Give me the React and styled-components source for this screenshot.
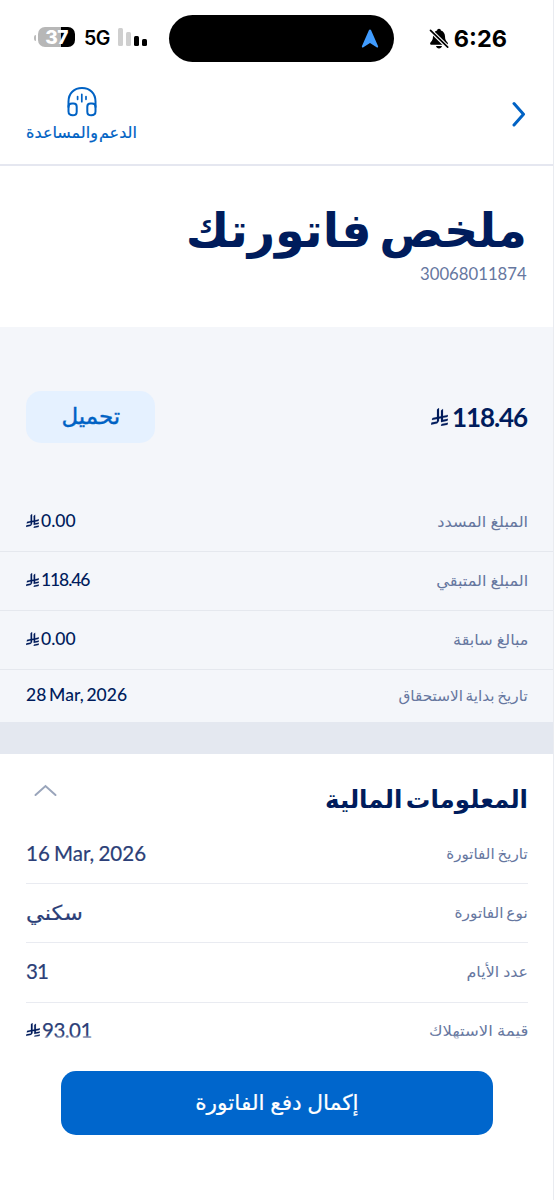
import React from "react";
import styled, { createGlobalStyle } from "styled-components";

const navy = "#001c5c";
const blue = "#0062c4";

const GlobalStyle = createGlobalStyle`
  * { box-sizing: border-box; }
  body { margin: 0; background: #fff; }
  h1, h2 { margin: 0; }
`;

const Page = styled.div`
  position: relative;
  width: 554px;
  height: 1200px;
  overflow: hidden;
  background: #fff;
  border-right: 1px solid #e9ebf0;
  font-family: Lato, "DejaVu Sans", sans-serif;
  color: ${navy};
`;

const StatusBar = styled.div`
  display: flex;
  align-items: center;
  height: 76px;
  padding: 0 46px 0 34px;
  font-family: Inter, sans-serif;
  color: #000;
`;

const BatteryNub = styled.div`
  width: 2px;
  height: 6px;
  margin-right: 2px;
  border-radius: 2px 0 0 2px;
  background: #bbb;
`;

const Battery = styled.div`
  width: 37px;
  height: 20px;
  margin: -2px 9px 0 0;
  border-radius: 7px;
  background: linear-gradient(90deg, #b7b7b7 0 61%, #000 61%);
  color: #fff;
  font-size: 19px;
  font-weight: 800;
  letter-spacing: -0.5px;
  line-height: 21px;
  text-align: center;
`;

const Network = styled.div`
  width: 34px;
  font-size: 19.5px;
  font-weight: 600;
  letter-spacing: -0.6px;
`;

const Signal = styled.div`
  display: flex;
  align-items: flex-end;
  gap: 3px;
  height: 18px;
  margin-top: -2px;
`;

const Bar = styled.div`
  width: 5px;
  height: ${(p) => p.$h}px;
  border-radius: 1.5px;
  background: ${(p) => (p.$on ? "#000" : "#cfcfcf")};
`;

const Island = styled.div`
  display: flex;
  align-items: center;
  justify-content: flex-end;
  width: 225px;
  height: 47px;
  margin-left: 22px;
  padding-right: 15px;
  border-radius: 24px;
  background: #000;
`;

const Clock = styled.div`
  display: flex;
  align-items: center;
  gap: 5px;
  margin-left: auto;
  font-size: 23.5px;
  font-weight: 700;
`;

const Header = styled.header`
  display: flex;
  justify-content: space-between;
  height: 90px;
  padding: 10px 27px 0 25px;
  border-bottom: 2px solid #e5e7f0;
`;

const Support = styled.div`
  display: flex;
  flex-direction: column;
  align-items: center;
  width: 113px;
  color: ${blue};
`;

const Text = styled.span`
  display: block;
  white-space: nowrap;
  direction: ${(p) => (p.$ltr ? "ltr" : "rtl")};
  font-size: ${(p) => p.$size}px;
  font-weight: ${(p) => p.$weight || 400};
  line-height: ${(p) => p.$line || 24}px;
  letter-spacing: ${(p) => p.$track || 0}px;
  word-spacing: ${(p) => p.$words || 0}px;
  -webkit-text-stroke: ${(p) => p.$bolder || 0}px currentColor;
  color: ${(p) => p.$color || "inherit"};
  transform: translateY(${(p) => p.$shift || 0}px) scaleX(${(p) => p.$stretch || 1});
  transform-origin: ${(p) => p.$origin || "center"};
`;

const Back = styled.div`
  padding-top: 15px;
`;

const TitleBlock = styled.section`
  display: flex;
  flex-direction: column;
  align-items: flex-end;
  height: 161px;
  padding: 29px 26px 0 0;
`;

const Summary = styled.section`
  height: 395px;
  background: #f4f6fa;
`;

const TotalRow = styled.div`
  display: flex;
  align-items: center;
  justify-content: space-between;
  height: 166px;
  padding: 14px 26px 0;
`;

const Amount = styled.div`
  display: flex;
  align-items: center;
  gap: ${(p) => p.$gap || 2}px;
`;

const Download = styled.button`
  display: flex;
  align-items: center;
  justify-content: center;
  width: 129px;
  height: 52px;
  padding: 0;
  border: 0;
  border-radius: 15px;
  background: #e5f1ff;
  color: ${blue};
  font-family: inherit;
`;

const SummaryRow = styled.div`
  display: flex;
  align-items: center;
  justify-content: space-between;
  height: ${(p) => p.$h || 59}px;
  padding: 0 25px 3px 26px;
  border-bottom: ${(p) => (p.$last ? 0 : 1)}px solid #e5e8ee;
`;

const Divider = styled.div`
  height: 32px;
  background: #e4e8f0;
`;

const Details = styled.section`
  padding: 0 25px 0 26px;
`;

const DetailsHead = styled.div`
  display: flex;
  justify-content: space-between;
  height: 71px;
  padding: 30px 0 0 8px;
`;

const DetailRow = styled.div`
  display: flex;
  align-items: center;
  justify-content: space-between;
  height: 59px;
  padding-bottom: 2px;
  border-bottom: 1px solid #e9ebf1;
  color: #2c3f78;

  &:nth-child(4) {
    height: 60px;
    padding-bottom: 3px;
  }

  &:last-child {
    padding-bottom: 4px;
  }
`;

const Footer = styled.footer`
  position: absolute;
  left: 0;
  right: 0;
  bottom: 0;
  height: 168px;
  padding: 39px 60px 0 61px;
  background: linear-gradient(180deg, rgba(255, 255, 255, 0) 3px, #fff 8px);
`;

const PayButton = styled.button`
  display: flex;
  align-items: center;
  justify-content: center;
  width: 100%;
  height: 64px;
  padding: 0;
  border: 0;
  border-radius: 15px;
  background: #0066cc;
  color: #fff;
  font-family: inherit;
`;

const RiyalMark = styled.svg`
  display: block;
  fill: ${navy};
  stroke: ${navy};
  stroke-width: 12;
`;

const Riyal = ({ w = 13, h = 14 }) => (
  <RiyalMark width={w} height={h} viewBox="0 0 1124.14 1256.39" preserveAspectRatio="none">
    <path d="M699.62,1113.02c-20.06,44.48-33.32,92.75-38.4,143.37l424.51-90.24c20.06-44.47,33.31-92.75,38.4-143.37l-424.51,90.24Z" />
    <path d="M1085.73,895.8c20.06-44.47,33.32-92.75,38.4-143.37l-330.68,70.33v-135.2l292.27-62.11c20.06-44.47,33.32-92.75,38.4-143.37l-330.68,70.27V66.13c-50.67,28.45-95.67,66.32-132.25,110.99v403.35l-132.25,28.11V0c-50.67,28.44-95.67,66.32-132.25,110.99v525.69l-295.91,62.88c-20.06,44.47-33.33,92.75-38.42,143.37l334.33-71.05v170.26l-358.3,76.14c-20.06,44.47-33.32,92.75-38.4,143.37l375.04-79.7c30.53-6.35,56.77-24.4,73.83-49.24l68.78-101.97c7.14-10.55,11.3-23.27,11.3-36.97v-149.98l132.25-28.11v270.4l424.53-90.28Z" />
  </RiyalMark>
);

const HeadsetIcon = () => (
  <svg width="30" height="32" viewBox="0 0 30 32" fill="none" stroke="currentColor" strokeWidth="2" strokeLinecap="round">
    <path d="M1.5 21V15.500C1.500 7.500 7 2 15 2s13.500 5.500 13.500 13.500V21" />
    <path d="M1.500 20.500C1.500 18.500 3 17.500 5 17.500h1.500c2.300 0 3.200 1 3.200 3.200v5c0 2.500-1.200 3.600-3.900 3.600-2.800 0-4.300-1.300-4.300-3.800Z" />
    <path d="M28.500 20.500c0-2-1.500-3-3.500-3h-1.500c-2.300 0-3.200 1-3.200 3.200v5c0 2.500 1.200 3.600 3.900 3.600 2.800 0 4.300-1.300 4.300-3.800Z" />
    <path strokeWidth="1.700" d="M10.600 10.500v2.800M14.800 8.300v7.400M19 10.500v2.800" />
  </svg>
);

const label = "#66779f";

const summaryRows = [
  { name: "المبلغ المسدد", value: "0.00", riyal: true, stretch: 1.08 },
  { name: "المبلغ المتبقي", value: "118.46", riyal: true, stretch: 1.08, track: -1.1 },
  { name: "مبالغ سابقة", value: "0.00", riyal: true, stretch: 1.07 },
  { name: "تاريخ بداية الاستحقاق", value: "28 Mar, 2026", stretch: 1.02, labelWords: -1.3, words: -1.6, h: 53, last: true },
];

const detailRows = [
  { name: "تاريخ الفاتورة", value: "16 Mar, 2026", stretch: 1.01, labelWords: -1, words: -1 },
  { name: "نوع الفاتورة", value: "سكني", stretch: 1.02, labelWords: -1, valueStretch: 1.1 },
  { name: "عدد الأيام", value: "31", stretch: 1.06, track: -1 },
  { name: "قيمة الاستهلاك", value: "93.01", riyal: true, stretch: 1.1, track: -0.5 },
];

export default function App() {
  return (
    <Page>
      <GlobalStyle />
      <StatusBar>
        <BatteryNub />
        <Battery>37</Battery>
        <Network>5G</Network>
        <Signal>
          <Bar $h={18} />
          <Bar $h={14} />
          <Bar $h={10} $on />
          <Bar $h={7} $on />
        </Signal>
        <Island>
          <svg width="18" height="19" viewBox="0 0 18 19" fill="#409cff">
            <path d="M9 .5c.5 0 .9.300 1.100.8L17 17c.5 1.200-.4 1.900-1.400 1.300L9 14 2.400 18.300C1.400 18.900.5 18.200 1 17L7.900 1.300C8.100.8 8.500.5 9 .5Z" />
          </svg>
        </Island>
        <Clock>
          <svg width="20" height="21" viewBox="0 0 20 21">
            <path fill="#000" d="M10 .8c1 0 1.800.7 1.900 1.700 2.600.8 4 3 4.100 5.800.1 3.400.8 4.300 2.100 5.600.5.500.8 1 .8 1.500 0 .8-.6 1.300-1.500 1.300H2.600c-.9 0-1.500-.5-1.500-1.300 0-.5.3-1 .8-1.500C3.200 12.600 3.900 11.700 4 8.300c.1-2.800 1.500-5 4.100-5.800C8.200 1.500 9 .8 10 .8ZM7 18h6c-.3 1.500-1.500 2.400-3 2.400S7.300 19.500 7 18Z" />
            <path stroke="#fff" strokeWidth="4" d="M0 1 20 20.500" />
            <path stroke="#000" strokeWidth="1.700" strokeLinecap="round" d="M1.500 2.300 18.700 19.200" />
          </svg>
          <span>6:26</span>
        </Clock>
      </StatusBar>

      <Header>
        <Support>
          <HeadsetIcon />
          <Text $size={16} $line={28} $words={-3} $bolder={0.2}>الدعم والمساعدة</Text>
        </Support>
        <Back>
          <svg width="14" height="26" viewBox="0 0 14 26" fill="none" stroke={blue} strokeWidth="3" strokeLinecap="round" strokeLinejoin="round">
            <path d="M2 2.500 11.500 13.200 2 24" />
          </svg>
        </Back>
      </Header>

      <TitleBlock>
        <Text as="h1" $size={47.5} $weight={700} $line={66} $words={-4} $shift={0.5} $origin="right">ملخص فاتورتك</Text>
        <Text $size={17.5} $color={label} $ltr $stretch={0.955} $shift={1} $origin="right">30068011874</Text>
      </TitleBlock>

      <Summary>
        <TotalRow>
          <Download><Text $size={22.5} $shift={-1.5} $stretch={1.02} $bolder={0.4}>تحميل</Text></Download>
          <Amount $gap={4}>
            <Riyal w={17} h={18} />
            <Text $size={26} $weight={700} $track={-1.1} $ltr>118.46</Text>
          </Amount>
        </TotalRow>
        {summaryRows.map((r) => (
          <SummaryRow key={r.name} $h={r.h} $last={r.last}>
            <Amount>
              {r.riyal && <Riyal />}
              <Text $size={17.5} $weight={500} $track={r.track} $words={r.words} $ltr>{r.value}</Text>
            </Amount>
            <Text $size={15} $color={label} $stretch={r.stretch} $words={r.labelWords} $origin="right">{r.name}</Text>
          </SummaryRow>
        ))}
      </Summary>

      <Divider />

      <Details>
        <DetailsHead>
          <svg width="23" height="13" viewBox="0 0 23 13" fill="none" stroke="#9aa5bb" strokeWidth="2" strokeLinecap="round">
            <path d="M1.500 11 11.500 2 21.500 11" />
          </svg>
          <Text as="h2" $size={24.5} $weight={700} $line={30} $words={-2.5} $shift={-0.5} $origin="right">المعلومات المالية</Text>
        </DetailsHead>
        {detailRows.map((r) => (
          <DetailRow key={r.name}>
            <Amount>
              {r.riyal && <Riyal w={14} />}
              <Text $size={20.5} $track={r.track} $words={r.words} $stretch={r.valueStretch} $bolder={0.2} $ltr $origin="left">{r.value}</Text>
            </Amount>
            <Text $size={15} $color={label} $stretch={r.stretch} $words={r.labelWords} $origin="right">{r.name}</Text>
          </DetailRow>
        ))}
      </Details>

      <Footer>
        <PayButton><Text $size={21.5} $shift={-1.5} $stretch={1.01} $bolder={0.2}>إكمال دفع الفاتورة</Text></PayButton>
      </Footer>
    </Page>
  );
}
